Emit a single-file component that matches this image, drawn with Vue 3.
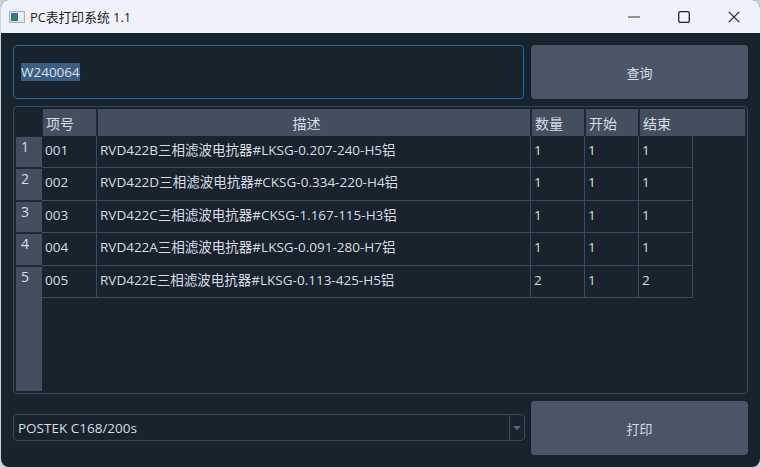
<script setup>
const rows = [
  { id: '001', desc: 'RVD422B三相滤波电抗器#LKSG-0.207-240-H5铝', qty: 1, start: 1, end: 1 },
  { id: '002', desc: 'RVD422D三相滤波电抗器#CKSG-0.334-220-H4铝', qty: 1, start: 1, end: 1 },
  { id: '003', desc: 'RVD422C三相滤波电抗器#CKSG-1.167-115-H3铝', qty: 1, start: 1, end: 1 },
  { id: '004', desc: 'RVD422A三相滤波电抗器#LKSG-0.091-280-H7铝', qty: 1, start: 1, end: 1 },
  { id: '005', desc: 'RVD422E三相滤波电抗器#LKSG-0.113-425-H5铝', qty: 2, start: 1, end: 2 },
]
</script>

<template>
  <div class="window">
    <header class="titlebar">
      <svg class="appicon" width="16" height="16" viewBox="0 0 16 16">
        <rect x="0.5" y="2.5" width="15" height="11" fill="#dfe5e6" stroke="#a9b2b5" />
        <rect x="2" y="4" width="7" height="8" fill="#2f7f78" />
        <rect x="2" y="4" width="7" height="3" fill="#3f6f9a" />
        <rect x="9" y="4" width="5" height="8" fill="#eef2f0" />
      </svg>
      <span class="title">PC表打印系统 1.1</span>
      <div class="controls">
        <span class="ctl"><svg width="12" height="12" viewBox="0 0 12 12"><path d="M0 6H12" stroke="#333" stroke-width="1.2" fill="none" /></svg></span>
        <span class="ctl"><svg width="12" height="12" viewBox="0 0 12 12"><rect x="0.7" y="0.7" width="10.6" height="10.6" rx="1.6" stroke="#222" stroke-width="1.3" fill="none" /></svg></span>
        <span class="ctl"><svg width="12" height="12" viewBox="0 0 12 12"><path d="M0.8 0.8L11.2 11.2M11.2 0.8L0.8 11.2" stroke="#222" stroke-width="1.2" fill="none" /></svg></span>
      </div>
    </header>

    <main class="body">
      <div class="top">
        <div class="input"><span class="sel">W240064</span></div>
        <button class="btn">查询</button>
      </div>

      <section class="frame">
        <div class="table">
          <div class="corner"></div>
          <div class="hcell">项号</div>
          <div class="hcell center">描述</div>
          <div class="hcell">数量</div>
          <div class="hcell">开始</div>
          <div class="hcell last">结束</div>

          <template v-for="(r, i) in rows" :key="r.id">
            <div class="rh" :class="{ stretch: i === 4 }">{{ i + 1 }}</div>
            <div class="cell first">{{ r.id }}</div>
            <div class="cell">{{ r.desc }}</div>
            <div class="cell">{{ r.qty }}</div>
            <div class="cell">{{ r.start }}</div>
            <div class="cell">{{ r.end }}</div>
          </template>
        </div>
      </section>

      <div class="bottom">
        <div class="combo">
          <span class="combo-text">POSTEK C168/200s</span>
          <span class="combo-arrow"></span>
        </div>
        <button class="btn">打印</button>
      </div>
    </main>
  </div>
</template>

<style scoped>
.window {
  width: 759px;
  height: 467px;
  margin-left: 1px;
  background: #19232e;
  border-radius: 8px;
  overflow: hidden;
  display: flex;
  flex-direction: column;
  font-family: "Open Sans", "Noto Sans CJK SC", sans-serif;
  color: #d8dde3;
  font-size: 13.5px;
}
.titlebar {
  height: 33px;
  flex: none;
  background: #f0f2f9;
  color: #1c1c1c;
  display: flex;
  align-items: center;
  padding-left: 8px;
  font-size: 12.8px;
}
.appicon { flex: none; margin-right: 5px; }
.controls { margin-left: auto; margin-right: 1px; display: flex; }
.ctl {
  width: 50px;
  height: 33px;
  display: flex;
  align-items: center;
  justify-content: center;
}
.body {
  flex: 1;
  padding: 12px;
  display: flex;
  flex-direction: column;
}
.top {
  display: flex;
  gap: 7px;
  height: 54px;
  flex: none;
}
.input {
  flex: 1;
  border: 1px solid #1a6cab;
  border-radius: 4px;
  display: flex;
  align-items: center;
  padding-left: 7px;
}
.sel {
  background: #3a5d84;
  color: #dde2e8;
  line-height: 18px;
}
.btn {
  width: 217px;
  flex: none;
  align-self: stretch;
  border: 0;
  border-radius: 4px;
  background: #4a5568;
  color: #d8dde3;
  font-family: "Noto Sans CJK SC", sans-serif;
  font-size: 13px;
}
.frame {
  height: 288px;
  box-sizing: border-box;
  flex: none;
  margin-top: 7px;
  border: 1px solid #3c4859;
  border-radius: 4px;
  padding: 2px;
}
.table {
  display: grid;
  grid-template-columns: 26px 55px 434px 54px 54px 54px 53px;
  grid-template-rows: 27px 32px 33px 32px 33px 32px 93px;
}
.corner { background: #19232e; }
.hcell {
  background: #434f5f;
  border-left: 1px solid #1f2935;
  border-right: 1px solid #1f2935;
  display: flex;
  align-items: center;
  padding-left: 3px;
  font-size: 14px;
  line-height: 1;
  font-family: "Noto Sans CJK SC", sans-serif;
}
.hcell.center { justify-content: center; padding-right: 18px; }
.hcell.last { grid-column: span 2; }
.rh {
  grid-column: 1;
  background: #434f5f;
  border-top: 1px solid #1f2935;
  border-bottom: 1px solid #1f2935;
  padding: 1px 0 0 5px;
  font-size: 14px;
  line-height: 18px;
}
.rh.stretch { grid-row: span 2; border-bottom: 0; }
.cell {
  border-right: 1px solid #3f4b5c;
  border-bottom: 1px solid #3f4b5c;
  padding: 4px 0 0 3px;
  line-height: 20px;
  white-space: nowrap;
}
.bottom {
  margin-top: 7px;
  display: flex;
  gap: 6px;
  height: 54px;
  flex: none;
  align-items: center;
}
.combo {
  flex: 1;
  height: 27px;
  margin-bottom: 1px;
  box-sizing: border-box;
  border: 1px solid #3c4859;
  border-radius: 4px;
  display: flex;
  align-items: center;
}
.combo-text { flex: 1; padding-left: 4px; }
.combo-arrow {
  width: 14px;
  height: 100%;
  border-left: 1px solid #3c4859;
  position: relative;
}
.combo-arrow::after {
  content: "";
  position: absolute;
  left: 3px;
  top: 11px;
  border: 4px solid transparent;
  border-top: 4px solid #5b6676;
  border-bottom: 0;
}
</style>

<style>
html, body { margin: 0; background: #cfd3d8; }
</style>
